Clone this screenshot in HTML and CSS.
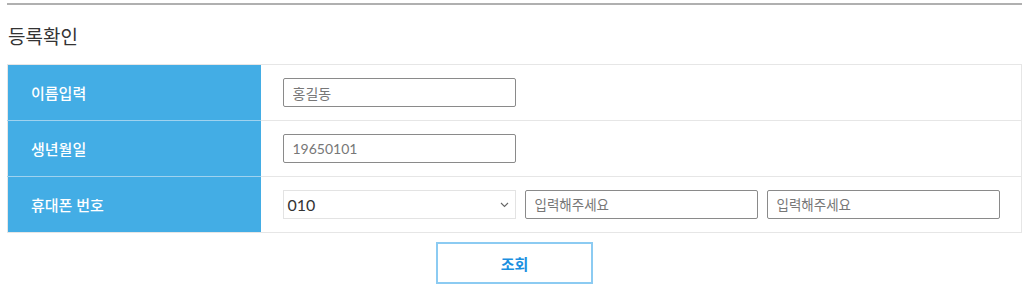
FILE: index.html
```html
<!DOCTYPE html>
<html lang="ko">
<head>
    <meta charset="UTF-8">
    <meta name="viewport" content="width=device-width, initial-scale=1.0">
    <title>등록확인</title>
    <link rel="stylesheet" href="styles.css">
</head>
<body>
    <div class="wrap">
        <h2 class="page-title">등록확인</h2>

        <table class="form-table">
            <tr>
                <th>이름입력</th>
                <td><input type="text" class="field" value="홍길동"></td>
            </tr>
            <tr>
                <th>생년월일</th>
                <td><input type="text" class="field" value="19650101"></td>
            </tr>
            <tr>
                <th>휴대폰 번호</th>
                <td>
                    <div class="phone-row">
                        <div class="select-box">
                            <span>010</span>
                            <svg class="caret" width="9" height="6" viewBox="0 0 9 6"><path d="M1 1l3.5 3.5L8 1" fill="none" stroke="#666" stroke-width="1.1"/></svg>
                        </div>
                        <input type="text" class="field" placeholder="입력해주세요">
                        <input type="text" class="field" placeholder="입력해주세요">
                    </div>
                </td>
            </tr>
        </table>

        <div class="btn-area">
            <button class="btn-search">조회</button>
        </div>
    </div>
</body>
</html>
```

FILE: styles.css
```css
body {
    margin: 0;
    font-family: Lato, "Noto Sans CJK KR", sans-serif;
    color: #333;
    background: #fff;
}
.wrap {
    padding: 3px 2px 0 7px;
}
.page-title {
    margin: 0;
    padding: 20px 0 0 1px;
    border-top: 2px solid #b0b0b0;
    height: 43px;
    box-sizing: border-box;
    font-size: 19px;
    font-weight: normal;
    line-height: 23px;
    color: #333;
    margin-bottom: 18px;
}
.form-table {
    width: 100%;
    border-collapse: collapse;
    border: 1px solid #e6e6e6;
}
.form-table th {
    width: 253px;
    height: 56px;
    padding: 0 0 0 23px;
    box-sizing: border-box;
    background: #43ade5;
    color: #fff;
    text-align: left;
    font-size: 15px;
    font-weight: 500;
    border-top: 1px solid #9fd2ef;
}
.form-table tr:first-child th {
    border-top: none;
}
.form-table td {
    padding: 0 0 0 22px;
    border-top: 1px solid #e6e6e6;
}
.field {
    width: 233px;
    height: 29px;
    box-sizing: border-box;
    border: 1px solid #8a8a8a;
    border-radius: 2px;
    padding: 0 9px;
    font-family: Lato, "Noto Sans CJK KR", sans-serif;
    font-size: 14px;
    color: #777;
    display: block;
}
.field::placeholder {
    color: #777;
    font-size: 13.5px;
}
.phone-row {
    display: flex;
    gap: 9px;
}
.select-box {
    width: 233px;
    height: 29px;
    box-sizing: border-box;
    border: 1px solid #e3e3e3;
    display: flex;
    align-items: center;
    justify-content: space-between;
    padding: 0 6px 0 4px;
    font-size: 16px;
    color: #333;
}
.btn-area {
    display: flex;
    justify-content: center;
    padding-top: 9px;
}
.btn-search {
    width: 157px;
    height: 42px;
    background: #fff;
    border: 2px solid #8ccbf2;
    color: #1b8fe0;
    font-family: "Noto Sans CJK KR", sans-serif;
    font-size: 15px;
    font-weight: bold;
}
```
